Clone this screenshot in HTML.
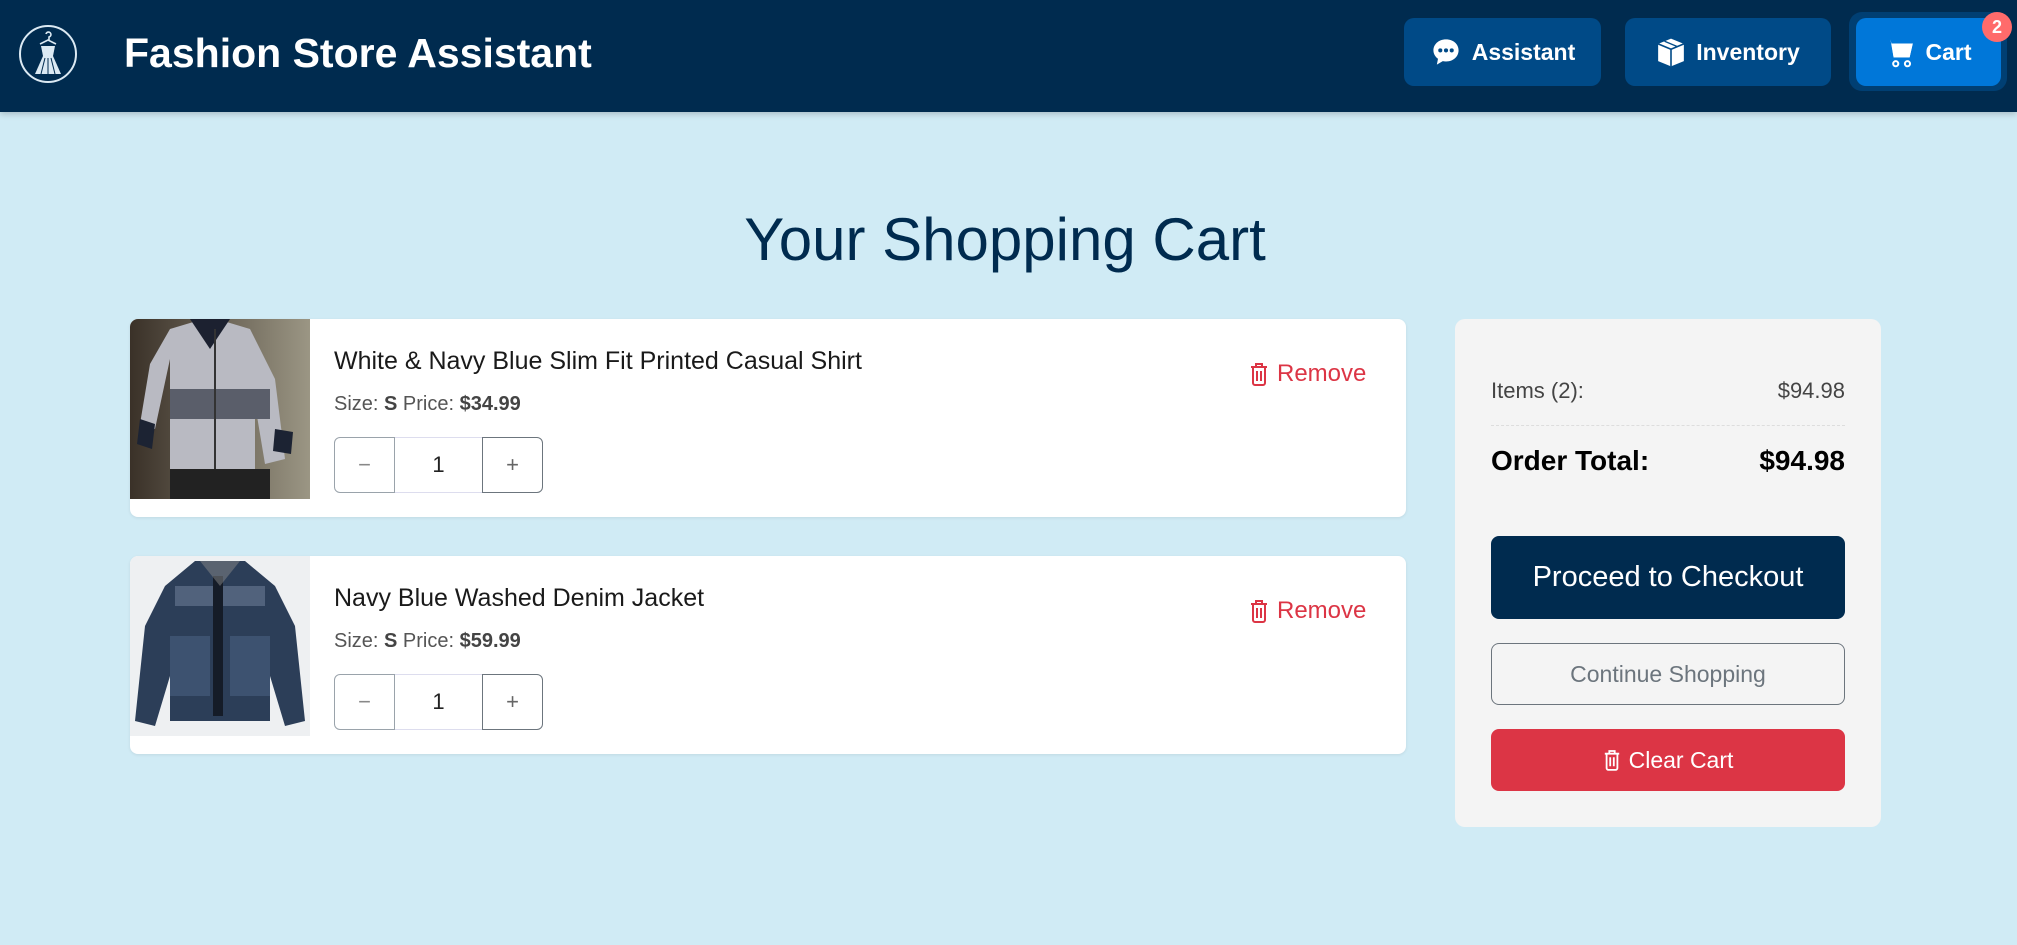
<!DOCTYPE html>
<html><head><meta charset="utf-8"><style>
*{box-sizing:border-box;margin:0;padding:0}
body{width:2017px;height:945px;background:#d0ebf5;font-family:"Liberation Sans",sans-serif;position:relative;overflow:hidden}
.hdr{position:absolute;left:0;top:0;width:2017px;height:112px;background:#002b4f;box-shadow:0 2px 6px rgba(0,0,0,.2)}
.title{position:absolute;left:124px;top:30px;font-size:41px;font-weight:bold;color:#fff;white-space:nowrap}
.nb{position:absolute;top:18px;height:68px;border-radius:10px;background:#004a87;color:#fff;font-weight:bold;font-size:23px;display:flex;align-items:center;justify-content:center;gap:10px}
.badge{position:absolute;left:1982px;top:12px;width:30px;height:30px;border-radius:50%;background:#ff6b6b;color:#fff;font-weight:bold;font-size:18px;text-align:center;line-height:30px}
h1{position:absolute;left:0;width:2010px;top:205px;text-align:center;font-weight:normal;font-size:60px;color:#002b4f}
.card{position:absolute;left:130px;width:1276px;height:198px;background:#fff;border-radius:8px;overflow:hidden;box-shadow:0 1px 3px rgba(0,0,0,.08)}
.card .img{position:absolute;left:0;top:0;width:180px;height:180px}
.name{position:absolute;left:204px;top:28px;font-size:25px;color:#1a1a1a}
.meta{position:absolute;left:204px;top:74px;font-size:20px;color:#555}
.meta b{color:#444}
.qty{position:absolute;left:204px;top:118px;height:56px;display:flex}
.qty div{height:56px;display:flex;align-items:center;justify-content:center;font-size:22px}
.qm{width:61px;border:1px solid #9aa3ab;border-radius:6px 0 0 6px;color:#888}
.qi{width:87px;border-top:1px solid #dde;border-bottom:1px solid #dde;color:#222}
.qp{width:61px;border:1px solid #6c757d;border-radius:0 6px 6px 0;color:#666}
.rm{position:absolute;left:1119px;top:41px;color:#dc3545;font-size:24px;display:flex;align-items:center;gap:8px}
.sum{position:absolute;left:1455px;top:319px;width:426px;height:508px;background:#f4f4f4;border-radius:10px}
.row{position:absolute;left:36px;width:354px;display:flex;justify-content:space-between}
.btn{position:absolute;left:36px;width:354px;border-radius:8px;display:flex;align-items:center;justify-content:center}
</style></head><body>
<div class="hdr">
<svg style="position:absolute;left:18px;top:24px" width="60" height="60" viewBox="0 0 60 60"><circle cx="30" cy="30" r="28" fill="none" stroke="#dbe9f3" stroke-width="2"/><path d="M28 10a2.5 2.5 0 1 1 3 3v3" fill="none" stroke="#dbe9f3" stroke-width="1.6"/><path d="M22 20l8-4 8 4" fill="none" stroke="#dbe9f3" stroke-width="1.6"/><path d="M23 22h14l-2 10h-10z" fill="#dbe9f3"/><path d="M25 32h10l8 18H17z" fill="#dbe9f3"/><path d="M27 34l-4 16M30 34v16M33 34l4 16" stroke="#002b4f" stroke-width="1"/></svg>
<div class="title">Fashion Store Assistant</div>
<div class="nb" style="left:1404px;width:197px"><svg width="32" height="32" viewBox="0 0 28 28"><path d="M14 3C7.4 3 3 7.5 3 12.6c0 3 1.6 5.6 4 7.3L6 25l5.2-3c.9.2 1.8.3 2.8.3 6.6 0 11-4.5 11-9.7S20.6 3 14 3z" fill="#fff"/><circle cx="9" cy="12.6" r="1.8" fill="#004a87"/><circle cx="14" cy="12.6" r="1.8" fill="#004a87"/><circle cx="19" cy="12.6" r="1.8" fill="#004a87"/></svg>Assistant</div>
<div class="nb" style="left:1625px;width:206px"><svg width="30" height="33" viewBox="0 0 28 30"><path d="M14 2l12 5v16l-12 5-12-5V7z" fill="#fff"/><path d="M2 7l12 5 12-5M14 12v16" stroke="#004a87" stroke-width="1.5" fill="none"/><path d="M8 4.5l12 5" stroke="#004a87" stroke-width="1.2"/></svg>Inventory</div>
<div style="position:absolute;left:1849px;top:12px;width:158px;height:79px;border-radius:13px;background:#003f73"></div>
<div class="nb" style="left:1856px;width:145px;background:#0077d9"><svg width="30" height="32" viewBox="0 0 28 30"><path d="M1 3h4l1 4h20l-3 13H8L5 3" fill="#fff"/><path d="M6 7h20l-3 13H8z" fill="#fff"/><circle cx="10" cy="26" r="2.4" fill="none" stroke="#fff" stroke-width="1.9"/><circle cx="21" cy="26" r="2.4" fill="none" stroke="#fff" stroke-width="1.9"/></svg>Cart</div>
<div class="badge">2</div>
</div>
<h1>Your Shopping Cart</h1>

<div class="card" style="top:319px">
<svg class="img" viewBox="0 0 180 180"><defs><linearGradient id="bg1" x1="0" x2="1"><stop offset="0" stop-color="#3a3128"/><stop offset="1" stop-color="#9b9684"/></linearGradient></defs><rect width="180" height="180" fill="url(#bg1)"/><path d="M40 10l40-12 40 12 25 50 10 80-20 5-10-60v100H40V40l-15 70-15-5 10-60z" fill="#b9bac2"/><rect x="40" y="70" width="100" height="30" fill="#5a5e6a"/><path d="M60 0l20 30 20-30z" fill="#1c2130"/><path d="M10 100l15 5-3 25-15-5zM145 110l18 3-2 22-18-3z" fill="#1c2333"/><rect x="40" y="150" width="100" height="30" fill="#222"/><path d="M85 10v140" stroke="#333" stroke-width="2"/></svg>
<div class="name">White &amp; Navy Blue Slim Fit Printed Casual Shirt</div>
<div class="meta">Size: <b>S</b> Price: <b>$34.99</b></div>
<div class="qty"><div class="qm">−</div><div class="qi">1</div><div class="qp">+</div></div>
<div class="rm"><svg width="20" height="24" viewBox="0 0 20 24"><path d="M2 5h16M7 5V2h6v3M4 6v15a2 2 0 0 0 2 2h8a2 2 0 0 0 2-2V6M8 9v10M12 9v10" fill="none" stroke="#dc3545" stroke-width="2"/></svg>Remove</div>
</div>

<div class="card" style="top:556px">
<svg class="img" viewBox="0 0 180 180"><rect width="180" height="180" fill="#eef0f2"/><path d="M65 5h50l30 25 20 40 10 95-20 5-15-50v45H40v-45l-15 50-20-5 10-95 20-40z" fill="#2c3e58"/><path d="M45 30h90v20H45z" fill="#6b7c94" opacity=".6"/><path d="M40 80h40v60H40zM100 80h40v60h-40z" fill="#4a6080" opacity=".6"/><path d="M88 20v140" stroke="#151c28" stroke-width="10"/><path d="M70 5l20 25 20-25" fill="#888" opacity=".5"/></svg>
<div class="name">Navy Blue Washed Denim Jacket</div>
<div class="meta">Size: <b>S</b> Price: <b>$59.99</b></div>
<div class="qty"><div class="qm">−</div><div class="qi">1</div><div class="qp">+</div></div>
<div class="rm"><svg width="20" height="24" viewBox="0 0 20 24"><path d="M2 5h16M7 5V2h6v3M4 6v15a2 2 0 0 0 2 2h8a2 2 0 0 0 2-2V6M8 9v10M12 9v10" fill="none" stroke="#dc3545" stroke-width="2"/></svg>Remove</div>
</div>

<div class="sum">
<div class="row" style="top:59px;font-size:22px;color:#444"><span>Items (2):</span><span>$94.98</span></div>
<div style="position:absolute;left:36px;top:106px;width:354px;border-top:1px dashed #ddd"></div>
<div class="row" style="top:126px;font-size:28px;font-weight:bold;color:#000"><span>Order Total:</span><span>$94.98</span></div>
<div class="btn" style="top:217px;height:83px;background:#002b4f;color:#fff;font-size:29px">Proceed to Checkout</div>
<div class="btn" style="top:324px;height:62px;border:1px solid #6c757d;color:#6c757d;font-size:23px">Continue Shopping</div>
<div class="btn" style="top:410px;height:62px;background:#dc3545;color:#fff;font-size:23px;gap:8px"><svg width="18" height="22" viewBox="0 0 20 24"><path d="M2 5h16M7 5V2h6v3M4 6v15a2 2 0 0 0 2 2h8a2 2 0 0 0 2-2V6M8 9v10M12 9v10" fill="none" stroke="#fff" stroke-width="2"/></svg>Clear Cart</div>
</div>
</body></html>
